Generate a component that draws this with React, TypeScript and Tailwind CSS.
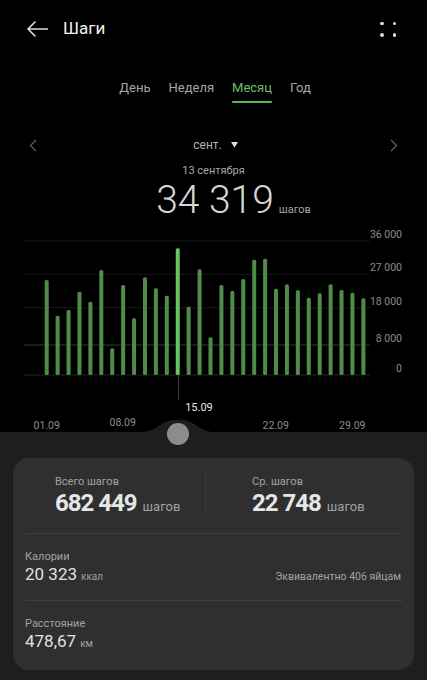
const tops = [
  280, 315.7, 310, 291.7, 301.7, 270, 348.3, 285, 318.3, 277.3, 288.3, 295.7, 248.3, 306.7, 269.3,
  337.3, 285, 291, 279, 259.7, 258.7, 288.7, 284.3, 290.3, 297.7, 293.3, 284.3, 290, 292.7, 298.3,
];

const OFF = 228;
const BASE = 375 - OFF;

const grid = [
  { y: 241, label: "36 000", color: "#171717" },
  { y: 274.3, label: "27 000", color: "#171717" },
  { y: 307.7, label: "18 000", color: "#171717" },
  { y: 345, label: "8 000", color: "#363636" },
  { y: 375, label: "0", color: "#242424" },
];

const dates = [
  { x: 46.7, y: 429, t: "01.09" },
  { x: 122.7, y: 425.5, t: "08.09" },
  { x: 275.7, y: 429, t: "22.09" },
  { x: 352.3, y: 429, t: "29.09" },
];

function Chart() {
  return (
    <svg width="427" height="204" viewBox="0 0 427 204" className="block">
      {grid.map((g) => (
        <g key={g.label}>
          <line x1="24" x2="370" y1={g.y - OFF} y2={g.y - OFF} stroke={g.color} strokeWidth="1" />
          <text
            x="402"
            y={g.y - OFF - 3}
            textAnchor="end"
            fill="#8c8c8c"
            fontSize="10.5"
            fontFamily="Roboto, sans-serif"
          >
            {g.label}
          </text>
        </g>
      ))}
      <line x1="178.5" x2="178.5" y1={BASE} y2={172} stroke="#3c3c3c" strokeWidth="1" />
      {tops.map((t, i) => {
        const x = 46.7 + i * 10.92;
        const sel = i === 12;
        return (
          <rect
            key={i}
            x={x - 2}
            y={t - OFF}
            width="4"
            height={375 - t}
            rx="1.5"
            fill={sel ? "#68c360" : "#4e8c48"}
          />
        );
      })}
      {dates.map((d) => (
        <text
          key={d.t}
          x={d.x}
          y={d.y - OFF}
          textAnchor="middle"
          fill="#8c8c8c"
          fontSize="10.5"
          fontFamily="Roboto, sans-serif"
        >
          {d.t}
        </text>
      ))}
      <text
        x="199"
        y={411 - OFF}
        textAnchor="middle"
        fill="#e6e6e6"
        fontSize="11"
        fontFamily="Roboto, sans-serif"
      >
        15.09
      </text>
    </svg>
  );
}

export default function App() {
  return (
    <div className="flex h-[680px] w-[427px] flex-col overflow-hidden bg-black font-['Roboto',sans-serif]">
      <header className="flex h-[58px] shrink-0 items-center pl-[27px] pr-[31px]">
        <svg width="21" height="16" viewBox="0 0 21 16" fill="none" stroke="#dcdcdc" strokeWidth="1.6" strokeLinecap="round" strokeLinejoin="round">
          <path d="M20.5 8H1M8 1L1 8l7 7" />
        </svg>
        <span className="ml-[15px] text-[17px] text-[#f0f0f0]">Шаги</span>
        <div className="ml-auto grid grid-cols-2 gap-x-[9px] gap-y-[8px]">
          <span className="h-[3.5px] w-[3.5px] rounded-full bg-[#dcdcdc]" />
          <span className="h-[3.5px] w-[3.5px] rounded-full bg-[#dcdcdc]" />
          <span className="h-[3.5px] w-[3.5px] rounded-full bg-[#dcdcdc]" />
          <span className="h-[3.5px] w-[3.5px] rounded-full bg-[#dcdcdc]" />
        </div>
      </header>

      <nav className="flex justify-center gap-[18px] pl-[3px] pt-[21px] text-[13px] leading-[18px]">
        <span className="text-[#a6a6a6]">День</span>
        <span className="text-[#a6a6a6]">Неделя</span>
        <div className="flex flex-col">
          <span className="text-[#6cbf66]">Месяц</span>
          <span className="mt-[4px] h-[2px] rounded bg-[#5fb45a]" />
        </div>
        <span className="text-[#a6a6a6]">Год</span>
      </nav>

      <div className="mt-[34px] flex h-[16px] items-center justify-between pl-[29px] pr-[29px]">
        <svg width="8" height="13" viewBox="0 0 8 13" fill="none" stroke="#5a5a5a" strokeWidth="1.4">
          <path d="M7 1L1.5 6.5 7 12" />
        </svg>
        <div className="ml-[4px] flex items-center gap-[9px] text-[12px] leading-[16px] text-[#b4b4b4]">
          <span>сент.</span>
          <svg width="7" height="6" viewBox="0 0 7 6">
            <path d="M0 0h7L3.5 5.5z" fill="#e0e0e0" />
          </svg>
        </div>
        <svg width="8" height="13" viewBox="0 0 8 13" fill="none" stroke="#5a5a5a" strokeWidth="1.4">
          <path d="M1 1l5.5 5.5L1 12" />
        </svg>
      </div>

      <div className="mt-[11px] text-center text-[11px] leading-[14px] text-[#a6a6a6]">13 сентября</div>

      <div className="mt-[2px] flex h-[40px] items-baseline justify-center pl-[40px]">
        <span className="text-[39px] font-light leading-[40px] text-[#d6d6d6]">34 319</span>
        <span className="ml-[5px] text-[11px] text-[#a6a6a6]">шагов</span>
      </div>

      <div className="mt-[8px]">
        <Chart />
      </div>

      <section className="relative flex-1 bg-[#1e1e1e] pt-[26px]">
        <svg
          className="absolute left-0 top-[-14px]"
          width="427"
          height="15"
          viewBox="0 0 427 15"
        >
          <path d="M138 14.5C158 14.5 160 1.5 178 1.5S198 14.5 218 14.5Z" fill="#1e1e1e" />
        </svg>
        <span className="absolute left-[167px] top-[-9px] h-[22px] w-[22px] rounded-full bg-[#8c8c8c]" />

        <div className="mx-[13px] h-[212px] rounded-[16px] bg-[#2f2f2f] px-[12px] pt-[17px]">
          <div className="flex items-start">
            <div className="flex-1 pl-[30px]">
              <div className="text-[11px] leading-[14px] text-[#a3a3a3]">Всего шагов</div>
              <div className="flex items-baseline">
                <span className="text-[24px] font-bold leading-[28px] tracking-[-1px] text-[#e6e6e6]">682 449</span>
                <span className="ml-[6px] text-[13px] text-[#a3a3a3]">шагов</span>
              </div>
            </div>
            <span className="mt-[-2px] h-[39px] w-px bg-[#3a3a3a]" />
            <div className="flex-1 pl-[46px]">
              <div className="text-[11px] leading-[14px] text-[#a3a3a3]">Ср. шагов</div>
              <div className="flex items-baseline">
                <span className="text-[24px] font-bold leading-[28px] tracking-[-1px] text-[#e6e6e6]">22 748</span>
                <span className="ml-[6px] text-[13px] text-[#a3a3a3]">шагов</span>
              </div>
            </div>
          </div>

          <div className="mt-[16px] h-px bg-[#404040]" />

          <div className="pt-[16px]">
            <div className="text-[11px] leading-[14px] text-[#a3a3a3]">Калории</div>
            <div className="flex items-baseline">
              <span className="text-[17px] leading-[20px] text-[#e0e0e0]">20 323</span>
              <span className="ml-[4px] text-[10px] text-[#a3a3a3]">ккал</span>
              <span className="ml-auto mr-[1px] text-[10.5px] text-[#a3a3a3]">Эквивалентно 406 яйцам</span>
            </div>
          </div>

          <div className="mt-[15px] h-px bg-[#404040]" />

          <div className="pt-[16px]">
            <div className="text-[11px] leading-[14px] text-[#a3a3a3]">Расстояние</div>
            <div className="flex items-baseline">
              <span className="text-[17px] leading-[20px] text-[#e0e0e0]">478,67</span>
              <span className="ml-[4px] text-[10px] text-[#a3a3a3]">км</span>
            </div>
          </div>
        </div>
      </section>
    </div>
  );
}
